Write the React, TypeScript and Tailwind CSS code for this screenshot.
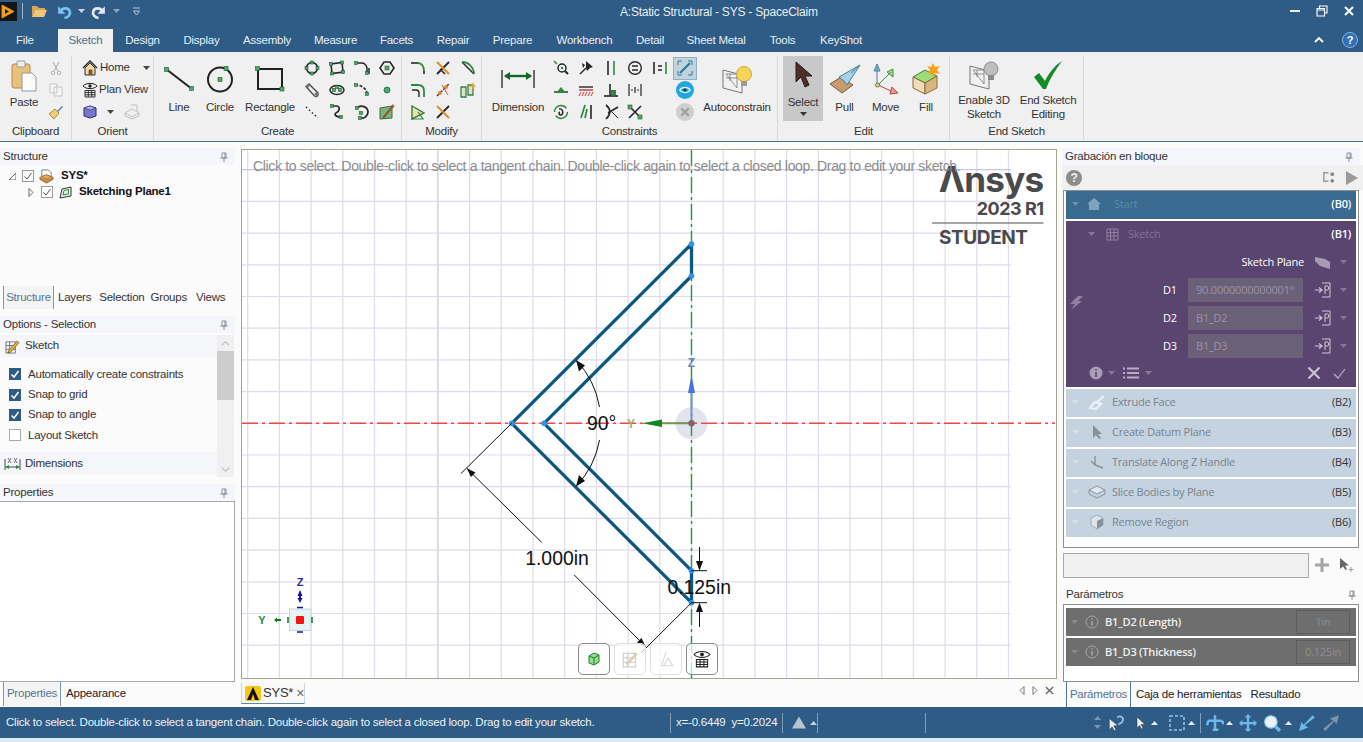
import type { ReactNode } from "react";

type IcoProps = { s?: number; w?: number; h?: number; box?: string; children: ReactNode };

function Ico({ s = 16, w, h, box = "0 0 16 16", children }: IcoProps) {
  return (
    <svg width={w ?? s} height={h ?? s} viewBox={box} fill="none" className="shrink-0">
      {children}
    </svg>
  );
}

// green sketch handle
function N({ x, y, d = 3 }: { x: number; y: number; d?: number }) {
  return <rect x={x - d / 2} y={y - d / 2} width={d} height={d} fill="#4fa86b" stroke="#1f5a35" strokeWidth={0.6} />;
}

const K = "#26262a";
const GR = "#2c8a3f";

function Caret({ c = "#555", up = false }: { c?: string; up?: boolean }) {
  return (
    <svg width="7" height="4" viewBox="0 0 7 4" className="shrink-0">
      <path d={up ? "M0 4L3.5 0L7 4Z" : "M0 0L7 0L3.5 4Z"} fill={c} />
    </svg>
  );
}

function Pin() {
  return (
    <Ico s={10} box="0 0 10 10">
      <path d="M3 1H7V6H3ZM1.5 6H8.5M5 6V10M6 1V6" stroke="#8b8f96" strokeWidth="1" />
    </Ico>
  );
}

function Header({ title, bg = "bg-[#f5f6fa]" }: { title: string; bg?: string }) {
  return (
    <div className={`flex h-[17px] items-center justify-between pl-[3px] pr-[6px] text-[11.5px] text-[#333] ${bg}`}>
      <span>{title}</span>
      <Pin />
    </div>
  );
}

function Large({
  w,
  label,
  iconH = 45,
  children,
}: {
  w: string;
  label: ReactNode;
  iconH?: number;
  children: ReactNode;
}) {
  return (
    <div className={`flex shrink-0 flex-col items-center whitespace-nowrap text-center text-[11.5px] leading-[13.5px] text-[#333] ${w}`}>
      <div className="flex items-center justify-center" style={{ height: iconH }}>
        {children}
      </div>
      <span>{label}</span>
    </div>
  );
}

function Group({ w, label, children }: { w: string; label: string; children: ReactNode }) {
  return (
    <div className={`flex h-[84px] shrink-0 flex-col border-r border-[#d9d9d9] ${w}`}>
      <div className="flex h-[68px]">{children}</div>
      <div className="h-[14px] text-center text-[11.5px] leading-[14px] text-[#333]">{label}</div>
    </div>
  );
}

function Cell({ w = "w-[25px]", children }: { w?: string; children?: ReactNode }) {
  return <div className={`flex h-[22px] items-center justify-center ${w}`}>{children}</div>;
}

/* ------- ribbon small icons ------- */
const createIcons = [
  <Ico><circle cx="8" cy="8" r="5.5" stroke={K} strokeWidth="1.6" /><N x={8} y={2.5} /><N x={2.5} y={8} /><N x={13.5} y={8} /><N x={8} y={13.5} /></Ico>,
  <Ico><path d="M2 4L13 2.5L14 12L3 13.5Z" stroke={K} strokeWidth="1.6" /><N x={2} y={4} /><N x={13} y={2.5} /><N x={14} y={12} /><N x={3} y={13.5} /></Ico>,
  <Ico><path d="M1 3H8C11 3 13 6 13 9V14M15 8V14" stroke={K} strokeWidth="1.5" /><N x={2} y={3} /><N x={13} y={13} /></Ico>,
  <Ico><path d="M5 2H11L15 8L11 14H5L1 8Z" stroke={K} strokeWidth="1.6" /><N x={8} y={8} d={4} /></Ico>,
  <Ico><path d="M2 4.5L5 2L14 11C15 14 12 15 10.5 14Z" stroke="#555" strokeWidth="1.5" /><circle cx="4" cy="4" r="1.5" fill="#777" /><circle cx="12" cy="12" r="1.5" fill="#777" /></Ico>,
  <Ico><ellipse cx="8" cy="8" rx="7" ry="4.5" stroke={K} strokeWidth="1.5" /><N x={8} y={5} /><N x={5} y={8} /><N x={11} y={8} /></Ico>,
  <Ico><path d="M1 3C7 3 12 6 13 11" stroke={K} strokeWidth="1.6" strokeDasharray="3 1.5" /><N x={2} y={3} /><N x={13} y={12} /></Ico>,
  <Ico><circle cx="8" cy="8" r="3" fill="#4fa86b" stroke="#2b7a44" /></Ico>,
  <Ico><path d="M2 3L14 14" stroke={K} strokeWidth="1.4" strokeDasharray="1.6 2.4" /></Ico>,
  <Ico><path d="M3 2H8C12 3 10 8 7 9C5 10 6 13 12 13" stroke={K} strokeWidth="1.7" /><N x={3} y={2} /><N x={12} y={13} /></Ico>,
  <Ico><path d="M3 4C7 0 14 3 14 8C14 12 10 15 6 14" stroke={K} strokeWidth="1.7" /><N x={3} y={4} /><N x={7} y={9} /><N x={6} y={14} /></Ico>,
  <Ico><path d="M1 4L13 2V14L1 15Z" fill="#7fb27e" stroke="#3b6d3b" /><path d="M4 14L14 2" stroke="#8c5a2b" strokeWidth="2" /><path d="M13 1L15 3" stroke="#c44" strokeWidth="2" /></Ico>,
];

const modifyIcons = [
  <Ico><path d="M1 3H8" stroke={K} strokeWidth="1.6" /><path d="M8 3C12 3 14 7 14 11" stroke={GR} strokeWidth="1.8" /><path d="M14 11V14" stroke={K} strokeWidth="1.6" /></Ico>,
  <Ico><path d="M2 14L14 2" stroke={K} strokeWidth="1.8" /><path d="M2 2L14 14" stroke="#e08a2a" strokeWidth="2" /><path d="M5 9L10 14" stroke={K} strokeWidth="1.5" /></Ico>,
  <Ico><path d="M2 2L14 14" stroke={K} strokeWidth="1.4" /><path d="M2 2C9 2 14 8 14 14" stroke={GR} strokeWidth="1.8" /></Ico>,
  <Ico><path d="M1 3H8C12 3 14 5 14 9V15" stroke={GR} strokeWidth="1.8" /><path d="M2 8H6C8 8 9 9 9 11V15" stroke={K} strokeWidth="1.4" /></Ico>,
  <Ico><path d="M2 14L14 2" stroke={K} strokeWidth="1.4" strokeDasharray="3 1.5" /><circle cx="5" cy="11" r="2" fill="#e08a2a" /><circle cx="11" cy="5" r="2" fill="#e08a2a" /><path d="M7 3L13 13" stroke="#d44" strokeWidth="1" /></Ico>,
  <Ico><path d="M1 5H6V15H1ZM8 3H13V13H8Z" stroke="#3c7d4a" strokeWidth="1.3" fill="#d7e6c8" /><path d="M13 0L14 3L16 4L14 5L13 8L12 5L10 4L12 3Z" fill="#e8a020" /></Ico>,
  <Ico><path d="M2 2L14 9L2 15Z" fill="#e7e6a8" stroke="#3b7a3b" strokeWidth="1.4" /><path d="M1 15H13L8 8" stroke="#2c8a3f" strokeWidth="1.2" /></Ico>,
  <Ico><path d="M2 14L14 2" stroke={K} strokeWidth="1.8" /><path d="M2 2L14 14" stroke="#e08a2a" strokeWidth="2" /></Ico>,
  null,
];

const constraintIcons = [
  <Ico><path d="M1 1L4 4" stroke={GR} strokeWidth="1.5" /><circle cx="9" cy="8" r="4" stroke={K} strokeWidth="1.5" /><circle cx="9" cy="8" r="1.2" fill={GR} /><path d="M12 11L15 14" stroke={K} strokeWidth="2" /></Ico>,
  <Ico><path d="M8 1L15 7L12 8L9 11L8 8Z" fill={K} /><path d="M2 14L8 8" stroke={K} strokeWidth="1.5" /><path d="M4 3L7 5L5 8Z" fill={K} /></Ico>,
  <Ico><path d="M5 1V15" stroke={K} strokeWidth="1.6" /><path d="M11 1V15" stroke={GR} strokeWidth="1.6" /></Ico>,
  <Ico><circle cx="8" cy="8" r="6.3" stroke={K} strokeWidth="1.4" /><path d="M5 6H11M5 10H11" stroke={K} strokeWidth="1.6" /></Ico>,
  <Ico><path d="M2 2V14" stroke={K} strokeWidth="1.6" /><path d="M14 2V14" stroke={GR} strokeWidth="1.6" /><path d="M6 6H10M6 10H10" stroke={K} strokeWidth="1.6" /></Ico>,
  <div className="flex h-[23px] w-[24px] items-center justify-center border border-[#8fb0c8] bg-[#c2d3df]">
    <Ico><path d="M3 13L13 3" stroke="#1a7f96" strokeWidth="2" /><path d="M1 5V1H5M11 1H15V5M15 11V15H11M5 15H1V11" stroke="#2d7f9e" strokeWidth="1" /></Ico>
  </div>,
  <Ico><path d="M1 10H15" stroke={K} strokeWidth="1.4" /><path d="M3 11L8 5L13 11Z" fill={GR} /></Ico>,
  <Ico><path d="M1 5H15" stroke={K} strokeWidth="1.4" /><path d="M1 8H15" stroke="#c33" strokeWidth="1.4" /><path d="M3 10L1 14M6 10L4 14M9 10L7 14M12 10L10 14M15 10L13 14" stroke="#c33" strokeWidth="1" /></Ico>,
  <Ico><path d="M1 14H15" stroke={K} strokeWidth="1.6" /><path d="M7 2V14" stroke={K} strokeWidth="1.6" /><path d="M8 8H13V13H8Z" fill={GR} /></Ico>,
  <Ico><path d="M2 2V14M14 2V14" stroke={K} strokeWidth="1.2" /><path d="M4 8H6M10 8H12M8 5V11" stroke={K} strokeWidth="1.2" /></Ico>,
  <div className="flex h-[18px] w-[18px] items-center justify-center rounded-full bg-[#1ea7e1]">
    <Ico s={12}><path d="M1 8C4 3.5 12 3.5 15 8C12 12.5 4 12.5 1 8Z" stroke="#fff" strokeWidth="1.6" /><circle cx="8" cy="8" r="2" fill="#333" /></Ico>
  </div>,
  <Ico><circle cx="8" cy="8" r="6.5" stroke={GR} strokeWidth="1.4" strokeDasharray="16 4" /><path d="M6 5C10 4 11 10 8 11C6 11 5 9 7 8" stroke={K} strokeWidth="1.4" /></Ico>,
  <Ico><path d="M3 14L7 1M7 14L9 5" stroke={GR} strokeWidth="1.7" /><path d="M13 1V15" stroke={K} strokeWidth="1.6" /></Ico>,
  <Ico><path d="M3 1C8 5 8 10 3 15" stroke={K} strokeWidth="1.7" /><path d="M5 9L15 3" stroke={K} strokeWidth="1.5" /><path d="M9 8L15 14" stroke={K} strokeWidth="1" /></Ico>,
  <Ico><path d="M2 14L14 2M2 2L14 14" stroke={K} strokeWidth="1.6" /><N x={3} y={3} d={4} /><N x={13} y={13} d={4} /></Ico>,
  null,
  <div className="flex h-[18px] w-[18px] items-center justify-center rounded-full bg-[#cfcfcf]">
    <Ico s={12}><path d="M3 3L13 13M13 3L3 13" stroke="#9a9a9a" strokeWidth="2.4" /></Ico>
  </div>,
];
// rows 2 and 3 leave column 5 empty
const constraintOrder = [0, 1, 2, 3, 4, 5, 6, 7, 8, 9, 15, 10, 11, 12, 13, 14, 15, 16];

function SketchDrawing() {
  const vs = Array.from({ length: 25 }, (_, i) => i - 14);
  const hs = Array.from({ length: 16 }, (_, i) => i - 8);
  return (
    <svg width="814" height="528" viewBox="242 150 814 528" fill="none" letterSpacing="0" className="absolute inset-0">
      {vs.map((k) => {
        const x = 691.5 + k * 31.7;
        return <line key={k} x1={x} x2={x} y1={150} y2={678} stroke={k === -8 ? "#c6c6de" : "#dcdcec"} strokeWidth="1.2" />;
      })}
      {hs.map((k) => {
        const y = 423.3 + k * 31.7;
        return <line key={k} x1={242} x2={1011} y1={y} y2={y} stroke={k === -8 ? "#c6c6de" : "#dcdcec"} strokeWidth="1.2" />;
      })}

      <circle cx="691.5" cy="423.3" r="16" fill="#dcdcea" fillOpacity="0.8" />
      <line x1="242" x2="1055" y1="423.3" y2="423.3" stroke="#f04848" strokeWidth="1.4" strokeDasharray="16 4 3 4" />
      <line x1="691.5" x2="691.5" y1="150" y2="678" stroke="#1f9a3c" strokeWidth="1.4" strokeDasharray="16 4 3 4" />

      {/* triad at the origin */}
      <line x1="691.5" x2="650" y1="423.3" y2="423.3" stroke="#6f9a55" strokeWidth="2" />
      <path d="M642 423.3L662 419.5V427Z" fill="#15851f" />
      <text x="631" y="427.5" textAnchor="middle" fontSize="12" fontWeight="700" fill="#a8ab62">Y</text>
      <line x1="691.5" x2="691.5" y1="423" y2="392" stroke="#7b8fd0" strokeWidth="2" />
      <path d="M691.5 375L695 393H688Z" fill="#4a74dc" />
      <text x="691.5" y="367" textAnchor="middle" fontSize="12" fontWeight="700" fill="#6f86bd">Z</text>
      <circle cx="691.5" cy="423.3" r="3" fill="#8e5f63" stroke="#6a6a6a" strokeWidth="0.5" />

      {/* profile */}
      <path
        d="M691.5 244L511.7 423.3L691.5 602.7V570.7L544 423.3L691.5 276Z"
        stroke="#0d5882"
        strokeWidth="3.3"
        strokeLinejoin="round"
      />
      {[
        [691.5, 244],
        [691.5, 276],
        [511.7, 423.3],
        [544, 423.3],
        [691.5, 570.7],
        [691.5, 602.7],
      ].map(([x, y]) => (
        <circle key={`${x}-${y}`} cx={x} cy={y} r="2.8" fill="#2f96ea" />
      ))}

      {/* dimensions */}
      <g stroke="#111" strokeWidth="1">
        <path d="M511.7 423.3L461 473.5" />
        <path d="M466.7 468.3L541.7 542.3" />
        <path d="M574.3 575L645.7 646.7" />
        <path d="M691.5 602.7L641.5 652.5" />
        <path d="M576 360A90 90 0 0 1 599.5 407" />
        <path d="M599.5 440A90 90 0 0 1 576 486.5" />
        <path d="M699.5 547V562M691 570.7H707M691 602.7H707M699.5 612V627" />
      </g>
      <g fill="#111">
        <path d="M466.7 468.3L475.5 472.5L471 477Z" />
        <path d="M645.7 646.7L641.5 638L637 642.5Z" />
        <path d="M576 360L579 371.5L585 365.5Z" />
        <path d="M576 486.5L579 475L585 481Z" />
        <path d="M699.5 570.7L696 561H703Z" />
        <path d="M699.5 602.7L696 612H703Z" />
      </g>
      <g fill="#111" fontSize="19.4">
        <text x="601.7" y="430" textAnchor="middle">90°</text>
        <text x="557" y="565" textAnchor="middle">1.000in</text>
        <text x="699.2" y="594" textAnchor="middle">0.125in</text>
      </g>

      {/* corner triad */}
      <rect x="289.5" y="609" width="21.5" height="21.5" fill="#e8f3f6" stroke="#c3d5dc" />
      <rect x="296" y="616" width="8" height="8" rx="1" fill="#f01414" />
      <text x="300" y="586" textAnchor="middle" fontSize="11" fontWeight="700" fill="#2b2ba0">Z</text>
      <path d="M300 590L302.5 596H301V598L302.5 598L300 603L297.5 598L299 598V596H297.5Z" fill="#16169a" />
      <path d="M297 607.5H303M297 632H303" stroke="#16169a" strokeWidth="1.5" />
      <text x="262" y="624" textAnchor="middle" fontSize="11" fontWeight="700" fill="#2c8a3f">Y</text>
      <path d="M270 620H274L277 617.5V619H281V621H277V622.5L274 620Z" fill="#15751f" />
      <path d="M288 617V623M312 617V623" stroke="#15751f" strokeWidth="1.5" />

      {/* logo */}
      <g fill="#4a4a4c" fontFamily="Inter, 'Liberation Sans', sans-serif">
        <text x="1043.5" y="192" textAnchor="end" fontSize="35" fontWeight="700" letterSpacing="-0.7">Λnsys</text>
        <text x="1043.5" y="215" textAnchor="end" fontSize="18" fontWeight="700" letterSpacing="-0.5">2023 R1</text>
        <text x="939" y="244" fontSize="19" fontWeight="700" letterSpacing="-0.4">STUDENT</text>
      </g>
      <line x1="932" x2="1043.5" y1="223" y2="223" stroke="#8a8a8a" strokeWidth="1.6" />
    </svg>
  );
}

function ViewBtn({ dim = false, children }: { dim?: boolean; children: ReactNode }) {
  return (
    <div
      className={`flex h-[32px] w-[32px] items-center justify-center rounded-[5px] border bg-white/70 ${
        dim ? "border-[#e0e0e0]" : "border-[#8a8a8a]"
      }`}
    >
      {children}
    </div>
  );
}

function EyeGrid({ s = 16 }: { s?: number }) {
  return (
    <Ico s={s}>
      <path d="M1 4C4 0.5 12 0.5 15 4C12 7.5 4 7.5 1 4Z" stroke="#222" strokeWidth="1" />
      <circle cx="8" cy="4" r="1.7" fill="#222" />
      <path d="M3 8.5H13V15H3ZM3 10.6H13M3 12.8H13M6.3 8.5V15M9.7 8.5V15" stroke="#222" strokeWidth="0.9" />
    </Ico>
  );
}

function CheckRow({ label, on = true }: { label: string; on?: boolean }) {
  return (
    <div className="flex h-[20.4px] items-center pl-[9px] text-[11.5px] text-[#333]">
      <div
        className={`flex h-[12px] w-[12px] items-center justify-center border ${
          on ? "border-[#2e5c86] bg-[#2e5c86]" : "border-[#a8a8a8] bg-white"
        }`}
      >
        {on && (
          <Ico s={10} box="0 0 10 10">
            <path d="M1.5 5.5L4 8L8.5 2" stroke="#fff" strokeWidth="1.5" />
          </Ico>
        )}
      </div>
      <span className="ml-[7px]">{label}</span>
    </div>
  );
}

function TreeCheck() {
  return (
    <div className="flex h-[12px] w-[12px] items-center justify-center border border-[#9a9a9a] bg-white">
      <Ico s={10} box="0 0 10 10">
        <path d="M1.5 5.5L4 8L8.5 2" stroke="#555" strokeWidth="1" />
      </Ico>
    </div>
  );
}

function LeftPanel() {
  return (
    <div className="flex w-[236px] shrink-0 flex-col pr-[1px] pt-[6px]">
      <Header title="Structure" />
      <div className="h-[120px] pt-[3px] text-[11.5px] text-[#111]">
        <div className="flex h-[16px] items-center pl-[9px]">
          <svg width="7" height="7" viewBox="0 0 7 7"><path d="M7 0V7H0Z" fill="#fff" stroke="#666" /></svg>
          <div className="ml-[6px]"><TreeCheck /></div>
          <div className="ml-[5px]">
            <Ico s={15}>
              <path d="M3 1H10L13 4V8H3Z" fill="#fff" stroke="#6c7a8c" />
              <path d="M1 9L8 6L15 9L8 13Z" fill="#e0b070" stroke="#96642c" />
              <path d="M1 9V11L8 15L15 11V9" fill="#c68a44" stroke="#96642c" />
            </Ico>
          </div>
          <span className="ml-[7px] font-bold">SYS*</span>
        </div>
        <div className="flex h-[16px] items-center pl-[28px]">
          <svg width="6" height="9" viewBox="0 0 6 9"><path d="M1 0.5V8.5L5 4.5Z" fill="#fff" stroke="#666" /></svg>
          <div className="ml-[7px]"><TreeCheck /></div>
          <div className="ml-[6px]">
            <Ico s={13} box="0 0 13 13">
              <path d="M3 3L12 1V10L1 12Z" fill="#e6f2e2" stroke="#333" />
              <path d="M5 4.5L9.5 3.5V8L4 9Z" stroke="#2c8a3f" />
            </Ico>
          </div>
          <span className="ml-[7px] font-bold">Sketching Plane1</span>
        </div>
      </div>
      <div className="flex h-[24px] items-center pl-[3px] pt-[1px] text-[11.5px] text-[#333]">
        <span className="flex h-[23px] w-[51px] items-center justify-center border-x border-[#7f96aa] bg-[#f4f4f4] text-[#55748f]">Structure</span>
        <span className="ml-[4px]">Layers</span>
        <span className="ml-[8px]">Selection</span>
        <span className="ml-[6px]">Groups</span>
        <span className="ml-[9px]">Views</span>
      </div>
      <div className="mt-[7px]"><Header title="Options - Selection" /></div>
      <div className="mt-[2px] flex h-[142px]">
        <div className="w-[217px]">
          <div className="flex h-[22px] items-center bg-[#f5f6fa] pl-[5px] text-[11.5px] text-[#333]">
            <Ico s={15}>
              <path d="M1 3H11V15H1ZM1 7H11M1 11H11M5 3V15" stroke="#555" strokeWidth="0.8" />
              <path d="M4 12L13 2L15 4L6 14L3 15Z" fill="#e2b23c" stroke="#6a4b12" strokeWidth="0.7" />
            </Ico>
            <span className="ml-[5px]">Sketch</span>
          </div>
          <div className="h-[95px] pt-[7px]">
            <CheckRow label="Automatically create constraints" />
            <CheckRow label="Snap to grid" />
            <CheckRow label="Snap to angle" />
            <CheckRow label="Layout Sketch" on={false} />
          </div>
          <div className="flex h-[23px] items-center bg-[#f5f6fa] pl-[4px] text-[11.5px] text-[#333]">
            <Ico w={17} h={15} box="0 0 17 15">
              <path d="M1 3V14M16 3V14M2 11H15" stroke="#444" strokeWidth="1" />
              <path d="M1 11L5 9V13ZM16 11L12 9V13Z" fill="#2c8a3f" />
              <path d="M4 2L7 7M7 2L4 7M10 2L13 7M13 2L10 7" stroke="#555" strokeWidth="0.8" />
            </Ico>
            <span className="ml-[4px]">Dimensions</span>
          </div>
        </div>
        <div className="flex h-[142px] w-[17px] flex-col bg-[#f0f0f0]">
          <div className="flex h-[16px] items-center justify-center">
            <Ico s={9} box="0 0 10 10"><path d="M1 7L5 3L9 7" stroke="#bbb" strokeWidth="1.2" /></Ico>
          </div>
          <div className="h-[49px] bg-[#cdcdcd]" />
          <div className="flex flex-1 items-end justify-center pb-[3px]">
            <Ico s={9} box="0 0 10 10"><path d="M1 3L5 7L9 3" stroke="#bbb" strokeWidth="1.2" /></Ico>
          </div>
        </div>
      </div>
      <div className="mt-[7px]"><Header title="Properties" /></div>
      <div className="h-[181px] border border-l-0 border-[#a8a8a8] bg-white" />
      <div className="flex h-[24px] items-center pl-[3px] text-[11.5px] text-[#222]">
        <span className="flex h-[24px] w-[58px] items-center justify-center border-x border-[#7f96aa] bg-[#f4f4f4] text-[#55748f]">Properties</span>
        <span className="ml-[5px]">Appearance</span>
      </div>
    </div>
  );
}

function CenterPanel() {
  return (
    <div className="flex w-[826px] shrink-0 flex-col pl-[5px] pr-[5px] pt-[7px]">
      <div className="relative h-[530px] w-[816px] border border-[#a3a38f] bg-white">
        <SketchDrawing />
        <div className="absolute left-[11px] top-[7px] whitespace-nowrap text-[14px] leading-[18px] tracking-[-0.34px] text-[#8c8c8c]">
          Click to select. Double-click to select a tangent chain. Double-click again to select a closed loop. Drag to edit your sketch.
        </div>
        <div className="absolute left-[336px] top-[493px] flex gap-[4px]">
          <ViewBtn>
            <Ico>
              <path d="M3 5L8 2L13 4V11L8 14L3 12Z" fill="#8fe08a" stroke="#2b7a33" />
              <path d="M3 5L8 7L13 4M8 7V14" stroke="#2b7a33" />
            </Ico>
          </ViewBtn>
          <ViewBtn dim>
            <Ico s={18}>
              <path d="M2 3H13V15H2ZM2 7H13M2 11H13M6 3V15" stroke="#cfcfcf" />
              <path d="M5 13L14 3" stroke="#d8d0a8" strokeWidth="2" />
            </Ico>
          </ViewBtn>
          <ViewBtn dim>
            <Ico s={18}>
              <path d="M8 2L4 14H14L10 7L6 14" stroke="#d8d8d8" />
            </Ico>
          </ViewBtn>
          <ViewBtn><EyeGrid s={18} /></ViewBtn>
        </div>
      </div>
      <div className="flex h-[28px] items-start justify-between pt-[4px]">
        <div className="flex h-[21px] w-[64px] items-center border border-t-0 border-b-[#5a86a8] border-x-[#c9d6df] bg-[#f8f8f8] pl-[3px] text-[13px] text-[#333]">
          <svg width="16" height="15" viewBox="0 0 16 15" className="shrink-0">
            <rect width="16" height="15" rx="2" fill="#f5c518" />
            <path d="M2 14L8 1L14 14H10L8 8L6 14Z" fill="#111" />
          </svg>
          <span className="ml-[2px]">SYS*</span>
          <span className="ml-[3px] text-[14px] leading-[14px] text-[#666]">×</span>
        </div>
        <div className="mr-[3px] mt-[3px] flex items-center gap-[7px]">
          <svg width="6" height="9" viewBox="0 0 6 9"><path d="M5 0.5V8.5L1 4.5Z" fill="#fff" stroke="#777" /></svg>
          <svg width="6" height="9" viewBox="0 0 6 9"><path d="M1 0.5V8.5L5 4.5Z" fill="#fff" stroke="#777" /></svg>
          <Ico s={9} box="0 0 10 10"><path d="M1 1L9 9M9 1L1 9" stroke="#666" strokeWidth="1.5" /></Ico>
        </div>
      </div>
    </div>
  );
}

function BlockRow({ icon, label, tag }: { icon: ReactNode; label: string; tag: string }) {
  return (
    <div className="flex h-[28px] items-center bg-[#c5d3e0] pb-[2px] pl-[6px] pr-[5px] text-[11px] font-['Open_Sans',sans-serif]">
      <Caret c="#d6e0e9" />
      <div className="ml-[9px] flex w-[18px] justify-center">{icon}</div>
      <span className="ml-[6px] flex-1 text-[#768392]">{label}</span>
      <span className="text-[#333]">{tag}</span>
    </div>
  );
}

function PButton() {
  return (
    <Ico w={18} h={16} box="0 0 18 16">
      <path d="M8 1H16V15H8" stroke="#cfc7d7" strokeWidth="1" />
      <path d="M1 8H7M5 5.5L8 8L5 10.5" stroke="#cfc7d7" strokeWidth="1.2" />
      <path d="M11 12V4H13.5C15 4 15 8 13.5 8H11" stroke="#cfc7d7" strokeWidth="1" />
    </Ico>
  );
}

function DimRow({ label, value }: { label: string; value: string }) {
  return (
    <div className="flex h-[24px] items-center font-['Open_Sans',sans-serif] text-[11px]">
      <span className="ml-[97px] w-[25px] text-white">{label}</span>
      <div className="flex h-[24px] w-[115px] items-center bg-[#6c6078] pl-[8px] text-[#9b93a6]">{value}</div>
      <div className="ml-[11px]"><PButton /></div>
      <div className="ml-[8px]"><Caret c="#85779a" /></div>
    </div>
  );
}

function ParamRow({ label, value }: { label: string; value: string }) {
  return (
    <div className="flex h-[28px] items-center bg-[#6e6e6e] pl-[5px] font-['Open_Sans',sans-serif] text-[11px] text-[#f0f0f0]">
      <Caret c="#8b8b8b" />
      <svg width="14" height="14" viewBox="0 0 14 14" className="ml-[7px]">
        <circle cx="7" cy="7" r="6" fill="#6e6e6e" stroke="#a5a5a5" />
        <path d="M7 6V10.5M7 3.2V4.6" stroke="#a5a5a5" strokeWidth="1.6" />
      </svg>
      <span className="ml-[6px] flex-1 font-semibold">{label}</span>
      <div className="mr-[6px] flex h-[24px] w-[54px] items-center justify-center border border-[#5c5c5c] text-[#8e8e8e]">{value}</div>
    </div>
  );
}

function RightPanel() {
  return (
    <div className="flex w-[301px] shrink-0 flex-col pt-[6px]">
      <div className="pr-[3px]"><Header title="Grabación en bloque" /></div>
      <div className="flex h-[25px] items-center justify-between bg-[#f0f0f0] pl-[4px] pr-[5px]">
        <div className="flex h-[16px] w-[16px] items-center justify-center rounded-full bg-[#8c8c8c] text-[12px] font-bold leading-none text-[#f0f0f0]">?</div>
        <div className="flex items-center gap-[10px]">
          <Ico s={15}>
            <path d="M8 3H3V12H8" stroke="#999" strokeWidth="1.5" />
            <circle cx="12" cy="4.5" r="2" fill="#888" />
            <circle cx="12" cy="11.5" r="2" fill="#888" />
          </Ico>
          <svg width="12" height="14" viewBox="0 0 12 14"><path d="M0 0L12 7L0 14Z" fill="#9a9a9a" /></svg>
        </div>
      </div>
      <div className="ml-[1px] flex h-[358px] w-[296px] flex-col gap-[2px] border border-[#8f8f8f] bg-white px-[2px]">
        <div className="flex h-[28px] items-center bg-[#3a6a8f] pb-[2px] pl-[6px] pr-[5px] font-['Open_Sans',sans-serif] text-[11px]">
          <Caret c="#6d95b2" />
          <div className="ml-[7px]">
            <Ico s={16}>
              <path d="M1 8L8 2L15 8H13V14H3V8Z" fill="#7fa3bd" />
            </Ico>
          </div>
          <span className="ml-[12px] flex-1 text-[#5f8aa8]">Start</span>
          <span className="font-semibold text-white">(B0)</span>
        </div>
        <div className="relative h-[166px] bg-[#5a4570] font-['Open_Sans',sans-serif] text-[11px]">
          <div className="flex h-[26px] items-center pl-[22px] pr-[5px]">
            <Caret c="#85779a" />
            <div className="ml-[11px]">
              <Ico s={13} box="0 0 13 13">
                <path d="M1 1H12V12H1ZM1 4.5H12M1 8H12M4.5 1V12M8 1V12" stroke="#8f81a3" strokeWidth="1" />
              </Ico>
            </div>
            <span className="ml-[9px] flex-1 text-[#826f96]">Sketch</span>
            <span className="font-semibold text-white">(B1)</span>
          </div>
          <div className="mt-[5px] flex h-[20px] items-center">
            <span className="w-[238px] text-right text-white">Sketch Plane</span>
            <div className="ml-[10px]">
              <Ico w={17} h={15} box="0 0 17 15">
                <path d="M1 2L11 4L16 7V14L6 11L1 6Z" fill="#a69ab5" />
              </Ico>
            </div>
            <div className="ml-[9px]"><Caret c="#85779a" /></div>
          </div>
          <div className="mt-[6px] flex flex-col gap-[4px]">
            <DimRow label="D1" value="90.0000000000001°" />
            <DimRow label="D2" value="B1_D2" />
            <DimRow label="D3" value="B1_D3" />
          </div>
          <div className="mt-[3px] flex h-[24px] items-center pl-[23px] pr-[6px]">
            <svg width="14" height="14" viewBox="0 0 14 14">
              <circle cx="7" cy="7" r="6.5" fill="#a89cb6" />
              <path d="M7 6V11M7 3V4.6" stroke="#5a4570" strokeWidth="1.6" />
            </svg>
            <div className="ml-[5px]"><Caret c="#85779a" /></div>
            <div className="ml-[8px]">
              <Ico w={16} h={12} box="0 0 16 12">
                <path d="M0 1.5H2M4 1.5H16M0 6H2M4 6H16M0 10.5H2M4 10.5H16" stroke="#b9aec6" strokeWidth="2" />
              </Ico>
            </div>
            <div className="ml-[6px]"><Caret c="#85779a" /></div>
            <div className="ml-[155px]">
              <Ico s={14} box="0 0 14 14"><path d="M1.5 1.5L12.5 12.5M12.5 1.5L1.5 12.5" stroke="#c9c1d2" strokeWidth="2.2" /></Ico>
            </div>
            <div className="ml-[12px]">
              <Ico s={13} box="0 0 13 13"><path d="M1 7L5 11L12 2" stroke="#b9aec6" strokeWidth="1.2" /></Ico>
            </div>
          </div>
          <div className="absolute left-[2px] top-[74px]">
            <Ico><path d="M10 1H15L10 6H14L3 15L7 9H2Z" fill="#8f81a3" /></Ico>
          </div>
        </div>
        <BlockRow
          label="Extrude Face"
          tag="(B2)"
          icon={<Ico><path d="M1 14L6 8L12 10L7 15ZM8 8L15 2" stroke="#eef2f6" strokeWidth="2" /></Ico>}
        />
        <BlockRow
          label="Create Datum Plane"
          tag="(B3)"
          icon={<Ico><path d="M4 1V14L7 11L10 15L12 14L9 10H13Z" fill="#87919c" /></Ico>}
        />
        <BlockRow
          label="Translate Along Z Handle"
          tag="(B4)"
          icon={<Ico><path d="M6 2V11L14 14M6 11L2 7" stroke="#87919c" strokeWidth="1.4" /></Ico>}
        />
        <BlockRow
          label="Slice Bodies by Plane"
          tag="(B5)"
          icon={
            <Ico w={18} h={14} box="0 0 18 14">
              <path d="M1 5L9 1L17 5L9 9Z" fill="#e2e8ee" stroke="#87919c" />
              <path d="M1 9L9 13L17 9M1 5V9M17 5V9" stroke="#87919c" />
            </Ico>
          }
        />
        <BlockRow
          label="Remove Region"
          tag="(B6)"
          icon={
            <Ico>
              <path d="M2 4L8 1L14 4V11L8 15L2 11Z" fill="#dde4ea" stroke="#a0a9b2" />
              <path d="M8 7L14 4V11L8 15Z" fill="#87919c" />
            </Ico>
          }
        />
      </div>
      <div className="mt-[4px] flex h-[26px] items-center">
        <div className="ml-[1px] h-[25px] w-[246px] border border-[#a9a9a9] bg-[#f0f0f0]" />
        <div className="ml-[6px]">
          <Ico s={14} box="0 0 14 14"><path d="M7 0V14M0 7H14" stroke="#a5a5a5" strokeWidth="3" /></Ico>
        </div>
        <div className="ml-[9px]">
          <Ico>
            <path d="M2 1V12L5 9.5L7.5 13L9 12L7 8.5H11Z" fill="#666" />
            <path d="M13 10V15M10.5 12.5H15.5" stroke="#999" strokeWidth="1" />
          </Ico>
        </div>
      </div>
      <div className="mt-[8px] flex h-[18px] items-center justify-between pl-[4px] pr-[6px] text-[11.5px] text-[#333]">
        <span>Parámetros</span>
        <Pin />
      </div>
      <div className="ml-[1px] flex h-[78px] w-[296px] flex-col gap-[2px] border border-[#8f8f8f] bg-white px-[2px] pt-[3px]">
        <ParamRow label="B1_D2 (Length)" value="1in" />
        <ParamRow label="B1_D3 (Thickness)" value="0.125in" />
      </div>
      <div className="flex h-[25px] items-center pl-[4px] text-[11.5px] text-[#222]">
        <span className="flex h-[25px] w-[65px] items-center justify-center border-x border-[#55748f] text-[#55748f]">Parámetros</span>
        <span className="ml-[5px]">Caja de herramientas</span>
        <span className="ml-[9px]">Resultado</span>
      </div>
    </div>
  );
}

function Ribbon() {
  return (
    <div className="flex h-[88px] items-start bg-[#f0f0f0] pt-[4px]">
      <Group w="w-[72px]" label="Clipboard">
        <Large w="w-[48px]" iconH={40} label="Paste">
          <svg width="26" height="32" viewBox="0 0 26 32" fill="none">
            <rect x="1" y="4" width="18" height="24" rx="2" fill="#e8c27c" stroke="#b48b48" />
            <rect x="6" y="1" width="8" height="6" rx="1" fill="#eee" stroke="#999" />
            <path d="M11 13H21L25 17V31H11Z" fill="#fbfbfb" stroke="#8f9aa8" />
          </svg>
        </Large>
        <div className="flex w-[16px] flex-col items-center pt-[1px]">
          <Cell w="w-[16px]">
            <Ico s={14} box="0 0 14 14"><path d="M4 1L9 10M10 1L5 10" stroke="#b5b5b5" strokeWidth="1.2" /><circle cx="4" cy="12" r="1.8" stroke="#b5b5b5" /><circle cx="10" cy="12" r="1.8" stroke="#b5b5b5" /></Ico>
          </Cell>
          <Cell w="w-[16px]">
            <Ico s={14} box="0 0 14 14"><path d="M1 1H8V10H1ZM5 4H13V13H5Z" fill="#f5f5f5" stroke="#c5c5c5" /></Ico>
          </Cell>
          <Cell w="w-[16px]">
            <Ico>
              <path d="M9 7L14 2L15 3L10 8Z" fill="#5a7ab0" />
              <path d="M1 10L7 5L11 9L6 15Z" fill="#ecd078" stroke="#a58a3a" />
            </Ico>
          </Cell>
        </div>
      </Group>
      <Group w="w-[82px]" label="Orient">
        <div className="flex flex-col pl-[10px] pt-[1px] text-[11.5px] text-[#333]">
          <div className="flex h-[22px] items-center">
            <Ico>
              <path d="M1 8L8 1L15 8" stroke="#333" strokeWidth="1.5" />
              <path d="M3 8V15H13V8L8 3Z" fill="#f2d9a0" stroke="#333" />
              <path d="M7 15V10H10V15" fill="#a5552b" stroke="#333" strokeWidth="0.6" />
            </Ico>
            <span className="ml-[2px]">Home</span>
            <div className="ml-[13px]"><Caret c="#444" /></div>
          </div>
          <div className="flex h-[22px] items-center">
            <EyeGrid />
            <span className="ml-[1px] whitespace-nowrap">Plan View</span>
          </div>
          <div className="flex h-[22px] items-center pl-[1px]">
            <Ico s={14} box="0 0 14 14">
              <path d="M1 3L7 1L13 3V11L7 13L1 11Z" fill="#7676cc" stroke="#30306a" />
              <path d="M1 3L7 5L13 3L7 1Z" fill="#b4b4ea" stroke="#30306a" strokeWidth="0.6" />
            </Ico>
            <div className="ml-[10px]"><Caret c="#444" /></div>
            <div className="ml-[10px]">
              <Ico>
                <path d="M1 9L8 5L15 9L8 13Z" stroke="#bfbfbf" />
                <path d="M1 9V12L8 15L15 12V9M7 1H13V7" stroke="#bfbfbf" />
              </Ico>
            </div>
          </div>
        </div>
      </Group>
      <Group w="w-[248px]" label="Create">
        <div className="flex pl-[5px]">
          <Large w="w-[40px]" label="Line">
            <svg width="30" height="24" viewBox="0 0 30 24" fill="none">
              <path d="M2 2L28 22" stroke="#222" strokeWidth="2" />
              <N x={2.5} y={2.5} d={4} />
              <N x={27.5} y={21.5} d={4} />
            </svg>
          </Large>
          <Large w="w-[42px]" label="Circle">
            <svg width="28" height="28" viewBox="0 0 28 28" fill="none">
              <circle cx="14" cy="14.5" r="12" stroke="#222" strokeWidth="2" />
              <N x={14} y={14.5} d={4} />
              <N x={20} y={3.5} d={4} />
            </svg>
          </Large>
          <Large w="w-[58px]" label="Rectangle">
            <svg width="30" height="26" viewBox="0 0 30 26" fill="none">
              <path d="M3 3H27V23H3Z" stroke="#222" strokeWidth="2" />
              <N x={2.5} y={2.5} d={4} />
              <N x={27} y={23} d={4} />
            </svg>
          </Large>
          <div className="grid h-[66px] w-[100px] grid-cols-4 pt-[1px]">
            {createIcons.map((ic, i) => (
              <Cell key={i}>{ic}</Cell>
            ))}
          </div>
        </div>
      </Group>
      <Group w="w-[80px]" label="Modify">
        <div className="ml-[3px] grid h-[66px] w-[75px] grid-cols-3 pt-[1px]">
          {modifyIcons.map((ic, i) => (
            <Cell key={i}>{ic}</Cell>
          ))}
        </div>
      </Group>
      <Group w="w-[296px]" label="Constraints">
        <div className="flex pl-[5px]">
          <Large w="w-[62px]" label="Dimension">
            <svg width="34" height="20" viewBox="0 0 34 20" fill="none">
              <path d="M1 1V19M33 1V19" stroke="#333" strokeWidth="1.4" />
              <path d="M4 7H30" stroke="#14652a" strokeWidth="2.4" />
              <path d="M3 7L9 3V11ZM31 7L25 3V11Z" fill="#14652a" />
            </svg>
          </Large>
          <div className="grid h-[66px] w-[148px] grid-cols-6 pt-[1px]">
            {constraintOrder.map((n, i) => (
              <Cell key={i} w="w-[24.7px]">{constraintIcons[n]}</Cell>
            ))}
          </div>
          <Large w="w-[80px]" label="Autoconstrain">
            <svg width="30" height="30" viewBox="0 0 30 30" fill="none">
              <path d="M1 6L20 11V29L1 24Z" fill="#f1f1f1" stroke="#777" />
              <path d="M4 10H15V24M4 10L15 24M8 10V17M4 14H15" stroke="#777" strokeWidth="0.8" />
              <circle cx="22" cy="10" r="7.5" fill="#f6d45a" stroke="#d0a83a" />
              <rect x="19" y="17" width="6" height="5" fill="#9a9a9a" />
            </svg>
          </Large>
        </div>
      </Group>
      <Group w="w-[172px]" label="Edit">
        <div className="flex pl-[5px]">
          <div className="flex h-[65px] w-[40px] flex-col items-center bg-[#c8c8c8] pt-[1px] text-[11.5px] text-[#333]">
            <div className="flex h-[38px] items-center">
              <svg width="20" height="30" viewBox="0 0 20 30" fill="none">
                <path d="M3 1V21L8 16L12 26L16 24L12 15H19Z" fill="#4f2f2a" stroke="#2a1a18" />
              </svg>
            </div>
            <span className="leading-[14px]">Select</span>
            <div className="mt-[3px]"><Caret c="#333" /></div>
          </div>
          <Large w="w-[43px]" label="Pull">
            <svg width="32" height="30" viewBox="0 0 32 30" fill="none">
              <path d="M1 20L12 13L24 21L13 29Z" fill="#c79b6d" stroke="#7a5a36" />
              <path d="M31 1L10 13L15 17L18 21Z" fill="#a6d2e4" stroke="#4a7f98" />
              <path d="M22 9L31 1" stroke="#4a7f98" />
            </svg>
          </Large>
          <Large w="w-[39px]" label="Move">
            <svg width="30" height="32" viewBox="0 0 30 32" fill="none">
              <path d="M6 22V4M6 1L9 8H3Z" fill="#8ec6de" stroke="#4a7f98" />
              <path d="M7 22L20 9M22 6L22 14L16 9Z" fill="#a8dc94" stroke="#4a8a3a" />
              <path d="M7 22L20 28M27 30L19 31L21 24Z" fill="#e89a90" stroke="#b44" />
              <circle cx="6.5" cy="22" r="2" fill="#e9d46a" stroke="#777" />
            </svg>
          </Large>
          <Large w="w-[42px]" label="Fill">
            <svg width="30" height="32" viewBox="0 0 30 32" fill="none">
              <path d="M2 14L14 7L26 13L14 20Z" fill="#9adf7a" stroke="#4a7a3a" />
              <path d="M2 14V25L14 31V20Z" fill="#f0dcb8" stroke="#8a6a3a" />
              <path d="M26 13V25L14 31V20Z" fill="#d9b783" stroke="#8a6a3a" />
              <path d="M22 0L24 4L29 3L26 7L29 11L24 10L22 14L20 10L16 11L19 7L16 3L20 4Z" fill="#f4a21e" />
            </svg>
          </Large>
        </div>
      </Group>
      <Group w="w-[134px]" label="End Sketch">
        <div className="flex">
          <Large
            w="w-[68px]"
            iconH={38}
            label={
              <>
                Enable 3D
                <br />
                Sketch
              </>
            }
          >
            <svg width="30" height="30" viewBox="0 0 30 30" fill="none">
              <path d="M1 6L20 11V29L1 24Z" fill="#f1f1f1" stroke="#777" />
              <path d="M4 10H15V24M4 10L15 24M8 10V17M4 14H15" stroke="#777" strokeWidth="0.8" />
              <circle cx="22" cy="9" r="7" fill="#bdbdbd" stroke="#8f8f8f" />
              <rect x="19" y="15" width="6" height="5" fill="#8a8a8a" />
            </svg>
          </Large>
          <Large
            w="w-[60px]"
            iconH={38}
            label={
              <>
                End Sketch
                <br />
                Editing
              </>
            }
          >
            <svg width="30" height="30" viewBox="0 0 30 30" fill="none">
              <path d="M1 17L6 13L12 21C16 13 21 6 29 1C23 9 17 18 13 29H10Z" fill="#148a2a" />
            </svg>
          </Large>
        </div>
      </Group>
    </div>
  );
}

const tabs = [
  { label: "File", w: "w-[58px] pl-[16px]" },
  { label: "Sketch", w: "w-[55px] justify-center bg-[#f0f0f0] text-[#4f6f8c] mt-[3px]" },
  { label: "Design", w: "w-[59px] justify-center" },
  { label: "Display", w: "w-[59px] justify-center" },
  { label: "Assembly", w: "w-[72px] justify-center" },
  { label: "Measure", w: "w-[65px] justify-center" },
  { label: "Facets", w: "w-[57px] justify-center" },
  { label: "Repair", w: "w-[56px] justify-center" },
  { label: "Prepare", w: "w-[63px] justify-center" },
  { label: "Workbench", w: "w-[81px] justify-center" },
  { label: "Detail", w: "w-[50px] justify-center" },
  { label: "Sheet Metal", w: "w-[82px] justify-center" },
  { label: "Tools", w: "w-[51px] justify-center" },
  { label: "KeyShot", w: "w-[66px] justify-center" },
];

function TitleBar() {
  return (
    <div className="flex h-[26px] items-center bg-[#2e5c86] pb-[4px] text-[#e9eef3]">
      <div className="flex w-[620px] items-center">
        <svg width="17" height="19" viewBox="0 0 17 19">
          <rect width="17" height="19" fill="#141414" />
          <path d="M2 3L14 9.5L2 16Z" fill="#f2a31b" stroke="#e08a10" />
          <path d="M5 7L9 9.5L5 12Z" fill="#141414" />
        </svg>
        <div className="ml-[5px] h-[16px] border-l border-[#9fb5c8]" />
        <div className="ml-[8px]">
          <Ico>
            <path d="M1 3H6L8 5H14V7H4L1 14Z" fill="#d9a653" />
            <path d="M1 14L4 7H16L13 14Z" fill="#f0c67a" />
          </Ico>
        </div>
        <div className="ml-[9px]">
          <Ico s={17}>
            <path d="M4 8C6 4 12 4 13 8C14 11 11 14 8 14" stroke="#7cc0f0" strokeWidth="2.6" />
            <path d="M2 3V10H9Z" fill="#7cc0f0" />
          </Ico>
        </div>
        <div className="ml-[5px]"><Caret c="#c9d6e1" /></div>
        <div className="ml-[5px]">
          <Ico s={17}>
            <path d="M12 8C10 4 4 4 3 8C2 11 5 14 8 14" stroke="#e2e8ee" strokeWidth="2.6" />
            <path d="M14 3V10H7Z" fill="#e2e8ee" />
          </Ico>
        </div>
        <div className="ml-[6px]"><Caret c="#8ba3b8" /></div>
        <div className="ml-[12px]">
          <Ico s={9} box="0 0 9 9">
            <path d="M1 1H8M1.5 4L4.5 8L7.5 4Z" stroke="#c9d6e1" strokeWidth="0.9" />
          </Ico>
        </div>
      </div>
      <span className="mt-[2px] whitespace-nowrap text-[12px]">A:Static Structural - SYS - SpaceClaim</span>
      <div className="flex flex-1 items-center justify-end gap-[15px] pr-[8px]">
        <Ico s={12} box="0 0 12 12"><path d="M1 6H11" stroke="#fff" strokeWidth="1.8" /></Ico>
        <Ico s={12} box="0 0 12 12"><path d="M3.5 3V1H11V8H9M1 3.5H8.5V11H1ZM1 5H8.5" stroke="#fff" strokeWidth="1.1" /></Ico>
        <Ico s={12} box="0 0 12 12"><path d="M2 2L10 10M10 2L2 10" stroke="#fff" strokeWidth="2" /></Ico>
      </div>
    </div>
  );
}

function TabBar() {
  return (
    <div className="flex h-[26px] items-stretch bg-[#2e5c86] text-[11.5px] text-[#e9eef3]">
      {tabs.map((t) => (
        <div key={t.label} className={`flex items-center whitespace-nowrap ${t.label === "Sketch" ? "" : "pt-[3px]"} ${t.w}`}>
          {t.label}
        </div>
      ))}
      <div className="flex flex-1 items-center justify-end gap-[18px] pr-[5px] pt-[2px]">
        <Ico s={10} box="0 0 10 10"><path d="M1 7L5 3L9 7" stroke="#fff" strokeWidth="1.8" /></Ico>
        <div className="flex h-[16px] w-[16px] items-center justify-center rounded-full border border-[#8ab2d8] bg-[#2f6fc0] text-[11px] font-bold leading-none text-white">?</div>
      </div>
    </div>
  );
}

function StatusBar() {
  return (
    <div className="flex h-[31px] items-center bg-[#2e5c86] text-[11.5px] text-[#edf2f6]">
      <span className="w-[670px] whitespace-nowrap pl-[6px]">
        Click to select. Double-click to select a tangent chain. Double-click again to select a closed loop. Drag to edit your sketch.
      </span>
      <div className="flex h-[20px] w-[112px] items-center whitespace-nowrap border-l border-[#7f9db6] pl-[5px]">
        x=-0.6449&nbsp;&nbsp;y=0.2024
      </div>
      <div className="flex h-[20px] w-[36px] items-center border-x border-[#7f9db6] pl-[9px]">
        <svg width="15" height="13" viewBox="0 0 15 13"><path d="M7.5 0L15 13H0Z" fill="#b6c4cf" /></svg>
        <div className="ml-[4px]"><Caret c="#c5d1db" up /></div>
      </div>
      <div className="h-[20px] w-[108px] border-r border-[#7f9db6]" />
      <div className="flex flex-1 items-center pl-[165px]">
        <div className="flex w-[12px] flex-col items-center gap-[5px]">
          <Caret c="#7a97ae" up />
          <Caret c="#7a97ae" />
        </div>
        <div className="ml-[4px]">
          <Ico s={18}>
            <path d="M2 4V14L4.5 11.5L6.5 15L8 14L6 10.5H10Z" fill="#e8edf2" stroke="#333" strokeWidth="0.5" />
            <path d="M9 3C12 1 15 3 14 6C13.5 8 11 9 10 9" stroke="#8ac4f0" strokeWidth="1.6" />
          </Ico>
        </div>
        <div className="ml-[8px]">
          <Ico>
            <path d="M4 2V13L6.5 10.5L8.5 14L10 13L8 9.5H12Z" fill="#f1f4f7" stroke="#333" strokeWidth="0.5" />
          </Ico>
        </div>
        <div className="ml-[2px]"><Caret c="#e8edf2" up /></div>
        <div className="ml-[11px]">
          <Ico>
            <path d="M1 1H15V15H1Z" stroke="#8ac4f0" strokeWidth="1.6" strokeDasharray="3 2" />
          </Ico>
        </div>
        <div className="ml-[3px]"><Caret c="#e8edf2" up /></div>
        <div className="ml-[5px] h-[20px] border-l border-[#7f9db6]" />
        <div className="ml-[5px]">
          <Ico s={18}>
            <path d="M8 1V15M2 6H14M2 6L1 10M14 6L16 9M6 14H11" stroke="#6fb8ec" strokeWidth="2.2" />
          </Ico>
        </div>
        <div className="ml-[2px]"><Caret c="#e8edf2" up /></div>
        <div className="ml-[6px]">
          <Ico s={18}>
            <path d="M8 1V15M1 8H15" stroke="#6fb8ec" strokeWidth="2" />
            <path d="M8 0L11 3H5ZM8 16L5 13H11ZM0 8L3 5V11ZM16 8L13 11V5Z" fill="#6fb8ec" />
          </Ico>
        </div>
        <div className="ml-[6px]">
          <Ico s={18}>
            <circle cx="7" cy="7" r="5.5" fill="#e9f2f8" stroke="#9fc8e6" />
            <path d="M11 11L15 15" stroke="#6fb8ec" strokeWidth="3" />
          </Ico>
        </div>
        <div className="ml-[4px]"><Caret c="#e8edf2" up /></div>
        <div className="ml-[6px]">
          <Ico s={18}><path d="M15 3L6 10L9 12L1 15L3 7L5 9.5L13 1Z" fill="#6fb8ec" /></Ico>
        </div>
        <div className="ml-[6px]">
          <Ico s={18}><path d="M1 13L10 6L7 4L15 1L13 9L11 6.5L3 15Z" fill="#7f95a7" /></Ico>
        </div>
      </div>
    </div>
  );
}

export default function App() {
  return (
    <div className="flex h-[742px] w-[1363px] flex-col overflow-hidden bg-[#fbfbfc] font-['Liberation_Sans',sans-serif] tracking-[-0.22px]">
      <TitleBar />
      <TabBar />
      <Ribbon />
      <div className="h-[2px] border-b border-[#4c6f8e] bg-[#f0f0f0]" />
      <div className="flex h-[565px]">
        <LeftPanel />
        <CenterPanel />
        <RightPanel />
      </div>
      <StatusBar />
      <div className="h-[4px] bg-[#dcecf1]" />
    </div>
  );
}
